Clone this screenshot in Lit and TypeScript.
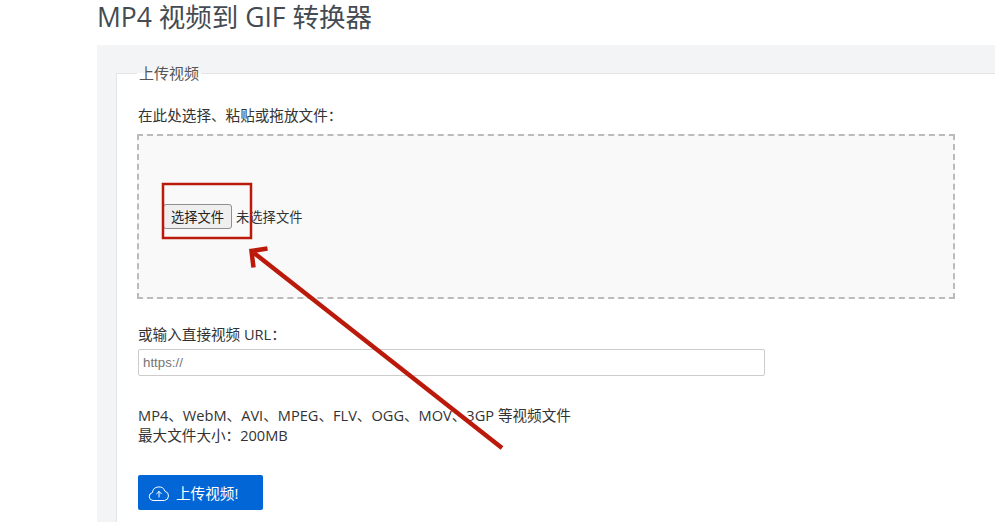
import { LitElement, html, css, svg } from "lit";
import { customElement } from "lit/decorators.js";

@customElement("app-root")
export class AppRoot extends LitElement {
  static styles = css`
    :host {
      display: block;
      position: relative;
      width: 995px;
      height: 522px;
      overflow: hidden;
      background: #fff;
      color: #333;
      font-family: "Open Sans", "Noto Sans CJK SC", sans-serif;
      font-size: 14.6px;
    }
    .page { padding-left: 97px; }
    h1 {
      margin: 0;
      height: 45px;
      font-size: 26.5px;
      line-height: 34px;
      font-weight: 400;
      color: #444b52;
    }
    .panel {
      background: #f3f4f6;
      padding: 18px 0 0 19px;
      height: 477px;
      box-sizing: border-box;
    }
    fieldset {
      margin: 0;
      padding: 21px 40px 0 21px;
      border: 0;
      border-top: 1px solid #e3e4e6;
      border-left: 1px solid #e3e4e6;
      background: #fff;
      height: 470px;
      min-width: 0;
      box-sizing: border-box;
    }
    legend {
      margin-left: -1px;
      padding: 0 2px;
      font-size: 15px;
      line-height: 20px;
      color: #555;
    }
    .label { line-height: 22px; }
    .drop {
      margin: 8px 0 0 -1px;
      width: 818px;
      height: 165px;
      box-sizing: border-box;
      background: #f9f9f9;
      border: 2px dashed #bbb;
      padding-left: 24px;
      display: flex;
      align-items: center;
      font-size: 13.3px;
    }
    .file-btn {
      font: inherit;
      color: #222;
      background: #efefef;
      border: 1px solid #8f8f8f;
      border-radius: 3px;
      height: 25px;
      width: 69px;
      padding: 0;
      margin-right: 4px;
    }
    .url-label { margin-top: 24px; }
    input {
      display: block;
      margin-top: 4px;
      width: 627px;
      height: 27px;
      box-sizing: border-box;
      border: 1px solid #ccc;
      border-radius: 2px;
      padding: 0 4px;
      font-family: "Liberation Sans", sans-serif;
      font-size: 13.3px;
      outline: none;
    }
    input::placeholder { color: #757575; }
    .info { margin-top: 29px; line-height: 20px; }
    .upload {
      margin-top: 30px;
      width: 125px;
      height: 35px;
      box-sizing: border-box;
      display: flex;
      align-items: center;
      gap: 6px;
      padding: 0 0 0 10px;
      background: #0366d6;
      color: #fff;
      border: 0;
      border-radius: 2px;
      font: inherit;
    }
    .upload svg { width: 22px; height: 18px; flex: none; }
    .notes {
      position: absolute;
      inset: 0;
      width: 995px;
      height: 522px;
      pointer-events: none;
    }
  `;

  render() {
    return html`
      <div class="page">
        <h1>MP4 视频到 GIF 转换器</h1>
        <div class="panel">
          <fieldset>
            <legend>上传视频</legend>
            <div class="label">在此处选择、粘贴或拖放文件\uFF1A</div>
            <div class="drop">
              <button class="file-btn">选择文件</button><span>未选择文件</span>
            </div>
            <div class="label url-label">或输入直接视频 URL\uFF1A</div>
            <input placeholder="https://" />
            <div class="info">
              MP4、WebM、AVI、MPEG、FLV、OGG、MOV、3GP 等视频文件<br />最大文件大小\uFF1A200MB
            </div>
            <button class="upload">
              <svg viewBox="0 0 22 18" fill="none" stroke="#fff" stroke-width="1" stroke-linecap="round" stroke-linejoin="round">
                <path d="M6 16.5H5a4 4 0 0 1-.6-7.9A6.5 6.5 0 0 1 17 7.3a4.7 4.7 0 0 1-.5 9.2H6z" />
                <path d="M11 13V7.5M8.6 9.8 11 7.4l2.4 2.4" />
              </svg>
              <span>上传视频!</span>
            </button>
          </fieldset>
        </div>
      </div>
      <svg class="notes" viewBox="0 0 995 522" fill="none" stroke="#bb1a0b">
        ${svg`
          <rect x="163" y="184" width="88" height="54" stroke-width="2.5" />
          <path d="M502 448 254 253" stroke-width="4.5" />
          <path d="M253.5 267.5 251.5 251 267.5 248.5" stroke-width="4.5" />
        `}
      </svg>
    `;
  }
}
